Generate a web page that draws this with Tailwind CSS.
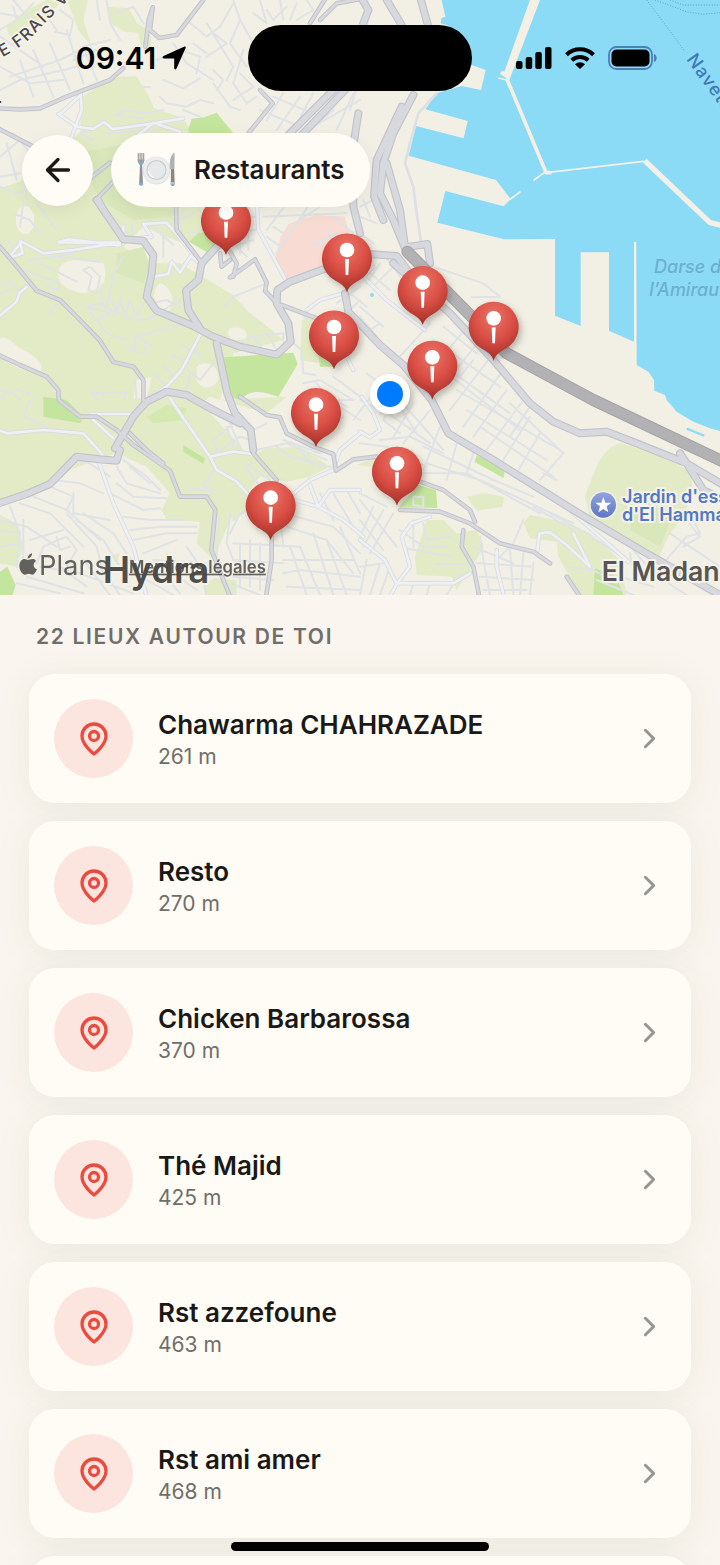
<!DOCTYPE html>
<html lang="fr">

<head>
  <meta charset="utf-8" />
  <meta name="viewport" content="width=device-width, initial-scale=1" />
  <title>Restaurants</title>
  <script src="https://cdn.jsdelivr.net/npm/@tailwindcss/browser@4"></script>
</head>

<body class="relative flex flex-col h-screen overflow-hidden bg-[#faf5ee] font-['Inter','Liberation_Sans',sans-serif] text-[#1a1917]">

  <!-- Map -->
  <section class="relative shrink-0 h-[595px] overflow-hidden bg-[#f2efe5]">
    <svg class="absolute inset-0 w-full h-full" viewBox="0 0 2160 1785" preserveAspectRatio="xMinYMin slice" fill="none" stroke-linecap="round" stroke-linejoin="round">
      <defs>
        <radialGradient id="red" cx=".5" cy=".25" r=".8">
          <stop offset="0" stop-color="#ec7367" />
          <stop offset=".5" stop-color="#d94e44" />
          <stop offset="1" stop-color="#962a22" />
        </radialGradient>
        <linearGradient id="blue" x2="0" y2="1">
          <stop offset="0" stop-color="#90a5dd" />
          <stop offset="1" stop-color="#5f77c6" />
        </linearGradient>
        <filter id="shade" x="-40%" y="-30%" width="180%" height="180%">
          <feDropShadow dx="8" dy="10" stdDeviation="9" flood-color="#5a5a50" flood-opacity=".4" />
        </filter>
        <g id="pin">
          <path fill="url(#red)" filter="url(#shade)" d="M0 100C-6 80-20 74-38 63A75 75 0 1 1 38 63C20 74 6 80 0 100Z" />
          <circle cy="-27" r="22" fill="#fff" />
          <path fill="#fff" d="M-6 0H6L4 48H-4Z" />
        </g>

        <g id="main">
          <path d="M290 600 345 680 370 718 430 722 460 765 455 820 440 890 470 932 580 978 640 1010 720 1040 830 1064 872 1025 865 970 830 910 832 870 870 845 970 808 1060 780" />
          <path d="M655 735 605 790 595 840 558 872 565 930 600 985" />
          <path d="M650 1030 665 1100 682 1180 705 1240 752 1290 760 1350" />
          <path d="M-10 1512 80 1482 150 1452 230 1370 300 1378 350 1382 360 1350M345 1345 400 1250 440 1205 500 1175 560 1185 640 1230 720 1270" />
          <path d="M1240 285 1180 400 1150 490 1140 580 1180 660 1215 745M1205 320 1130 480 1122 590 1150 660M1160 490 1200 630 1215 740" />
          <path d="M1160 0 1205 75M1260-10 1285 80M1082-10 1105 30 1090 70" />
          <path d="M1080 760 1190 768 1230 820M1215 742 1282 732 1290 790" />
          <path d="M1040 265 905 405M1000 270 860 410M1075 340 1055 470 1060 620 1080 700" />
          <path d="M1035 880 1045 935 1140 1035 1210 1095 1295 1200 1345 1300 1480 1380 1720 1530 1940 1660 2160 1785" />
          <path d="M1180 790 1350 940 1480 1080 1590 1210 1660 1265 1740 1300 1820 1295 1910 1330 2060 1390 2170 1455M2040 1360 2060 1390 2110 1470 2170 1500" />
        </g>
        <g id="mid">
          <path d="M-10 730 30 775 110 872 180 900 250 970 300 1022 340 1086 400 1100 430 1140 430 1200" />
          <path d="M-10 1062 60 1095 140 1130 175 1170 176 1200 240 1250 290 1250 350 1290 400 1335 450 1370 510 1412 540 1490 620 1490 646 1530 634 1650 690 1790" />
          <path d="M390 1300 440 1350 490 1390" />
          <path d="M-10 325 60 328 120 325 200 290 330 240 370 205M436 140 446 60 458 22 450 90 478 114 530 105 610 0" />
          <path d="M-10 383 100 440M270 535 330 488M380 490 340 545 295 592 345 680" />
          <path d="M780 270 818 310 745 400M930 70 980-10M960 60 1010 10 1090-5" />
          <path d="M845 915 950 955 1010 980M690 832 765 778 800 848 795 872 830 910M700 830 710 790 690 755M660 760 665 800 690 780M528 620 530 690 605 788" />
          <path d="M720 1190 800 1245 840 1252 860 1300 940 1340 1000 1362 1008 1412 1060 1378 1130 1370M760 1360 830 1440" />
          <path d="M1260 1445 1330 1470 1410 1530 1425 1565M1200 1530 1320 1535 1410 1570 1500 1630 1600 1655 1650 1690M1390 1590 1385 1640 1420 1700 1438 1790M1700 1730 1740 1790" />
          <path d="M815 1610 815 1680 798 1790" />
        </g>
        <g id="light">
          <path d="M-10 1288 20 1300 130 1290 250 1300 315 1372M297 1388 340 1510 400 1640 440 1790M510 1195 540 1240 630 1370 650 1410 710 1445 760 1500M630 1370 700 1355 755 1362" />
          <path d="M600 1005 545 1110 500 1160 450 1190M870 1490 930 1440 1000 1410 1020 1350 1080 1300M930 1455 955 1520 990 1470 1080 1470M880 1500 955 1520 1030 1560 1090 1610" />
          <path d="M770 600 775 690 860 845M242 280 245 330 215 410M175 342 230 380 280 387 312 366 338 387 430 375 550 355M180 342 242 285M415 405 460 368 540 395" />
          <path d="M25 775 65 725 130 760 220 750 360 728 175 727 205 718 360 736M60 725 68 760 25 775M370 680 368 720M430 672 500 668 545 720 600 790M460 830 505 822 515 785 540 818 572 768 600 790M430 672 455 710 370 720" />
          <path d="M-10 955 50 905 58 880 80 860M272 1242 400 1242M340 1315 280 1260" />
          <path d="M1080 1620 1155 1680 1190 1752 1230 1700 1205 1610 1235 1570 1290 1550M1190 1750 1360 1750 1410 1720M1190 1752 1170 1790M1490 1650 1490 1700 1512 1790" />
          <path d="M1612 1655 1618 1600 1650 1597 1700 1635 1770 1700 1720 1600M1720 1540 1885 1685M1080 1295 1110 1312 1140 1290 1120 1240 1085 1190" />
          <path d="M920 930 960 900 1030 880M1090 830 1160 900 1275 990M1120 800 1090 830M1010 1010 1060 1110" />
        </g>
        <g id="street">
          <!-- north-west -->
          <path d="M0 110 60 150 130 200M40 0 90 60M0 200 90 250 190 240M60 180 100 290M100 150 160 290M150 130 210 270M30 230 180 180 240 150M0 270 60 240 230 200M200 90 250 250M220 180 290 150M290 240 250 140 330 120" />
          <path d="M165 95 210 105 220 60 180 30M320 0 330 70 360 120M290 0 300 60M350 40 400 20 430 70M0 90 50 60 40 20M0 40 60 50 100 10M120 20 170 90" />
          <path d="M480 290 500 310 560 320 600 300 640 310M490 240 550 265 600 235M470 180 540 150 600 170 590 220M520 130 560 190 640 240M620 70 700 200 680 240M560 60 620 110 660 80 700 10M620 160 580 130M700 0 720 60 690 130 740 200M640 100 680 130 620 170" />
          <path d="M720 60 760 130 790 150M800 30 820 60 860 20M840 0 850 60M870 60 890 10M720 220 760 260 700 300M730 150 700 250 740 310 770 290M640 250 690 320 720 330M550 330 600 350M640 210 670 240 650 270M760 40 800 70 780 0M890 60 940 30 920 0" />
          <path d="M355 345 370 330 440 340 490 330M350 345 430 355M320 400 480 390M420 260 450 262M280 420 240 400 270 390M0 470 60 420M20 430 50 540M40 400 100 470M0 530 60 520M0 560 50 580 100 560 160 600M70 520 80 600" />
          <path d="M780 330 900 380M820 290 960 350M850 280 800 360M900 290 830 390M940 280 880 390M1000 330 940 380M1060 280 1010 390M1080 230 1050 330M940 380 1080 300" />
          <!-- west -->
          <path d="M40 640 90 660 120 700M70 610 60 680M110 610 170 690M130 600 180 620M20 720 40 740M50 800 100 820 180 850M110 785 230 845M90 780 170 770 300 785M170 770 220 760M0 850 40 850M30 840 60 880M0 880 30 870" />
          <path d="M250 810 270 800 300 830 290 880 265 870 275 830 250 810M300 870 310 910M320 920 340 830 370 770M260 920 290 960 320 1000 380 1020M330 900 360 940M365 890 350 940M340 950 360 900 375 945 390 900 410 950 430 910M260 920 300 910 350 940M365 955 430 960 500 935M140 860 180 870M150 940 175 905" />
          <path d="M410 1000 400 1050 420 1060M410 1010 460 1040M420 1005 540 975M290 960 330 940 260 920M380 1040 410 1045M430 1030 440 1060M490 700 490 770M460 680 520 735M395 675 400 710" />
          <path d="M545 1035 590 1060M515 1065 565 1090M490 1095 530 1140M460 1120 500 1160M565 1110 600 1140 640 1090M560 1170 570 1120M440 960 540 900M450 910 500 900 540 920M590 1045 600 1070M405 1140 410 1200" />
          <path d="M670 925 700 890 800 850M700 1040 760 1010 850 1000M760 1010 790 1050M800 1000 830 1050M850 1000 850 1060M880 1030 905 1050 910 1120 945 1125M920 960 900 930M910 1150 960 1140 1060 1200M1000 1130 1080 1190" />
          <path d="M0 1170 40 1180 60 1200M50 1170 90 1180M270 1180 380 1175 370 1200M280 1180 290 1200M310 1175 310 1200M90 1200 70 1250 140 1280M20 1170 0 1200" />
          <!-- city grid -->
          <path d="M550 610 540 700M560 620 600 600M540 660 580 640M570 700 640 690M590 620 740 770M780 620 1050 610M790 650 1040 640M800 690 860 610M830 760 930 610M900 660 990 600M720 610 720 760M745 620 745 750M720 650 770 650M700 700 770 690M940 735 1010 700M820 680 850 700M800 710 840 740M700 740 760 720" />
          <path d="M1000 650 1060 700M980 690 1040 760M1010 910 1080 860M1020 960 1080 900M1050 880 1100 920M1110 820 1170 870M1140 790 1100 850M1180 800 1120 860M1150 760 1200 830" />
          <path d="M1080 700 1120 730M1080 650 1130 670M1090 600 1110 650M1120 600 1080 620M1300 800 1450 850 1500 890 1415 892M1110 990 1140 970M1080 920 1150 980M1080 950 1130 1010M1200 1070 1290 970" />
          <path d="M1330 980 1430 1060M1300 1020 1500 1160M1280 1060 1530 1240M1400 980 1290 1120M1440 1020 1320 1170M1480 1060 1350 1230M1510 1110 1390 1280M1520 1170 1420 1310M1570 1200 1460 1350M1590 1250 1510 1380M1620 1300 1550 1420" />
          <path d="M1340 1120 1560 1290M1370 1170 1680 1350M1400 1230 1640 1380M1440 1280 1660 1430M1530 1210 1690 1360 1620 1440M1590 1220 1530 1310M1630 1420 1670 1440M1380 1130 1420 1080" />
          <!-- centre -->
          <path d="M1100 1120 1200 1200 1330 1350M1080 1200 1180 1250 1290 1330M1120 1180 1060 1260M1160 1160 1250 1300M1200 1150 1150 1260 1200 1300M1240 1210 1180 1310M1140 1320 1230 1310 1330 1360M1080 1330 1160 1340 1280 1400M1270 1340 1480 1440 1600 1490M1280 1390 1440 1440 1720 1570M1260 1420 1400 1420 1620 1540" />
          <path d="M1200 1230 1140 1240M1290 1230 1210 1330M1320 1280 1270 1410M1370 1330 1340 1440M1420 1360 1400 1420M1040 1220 970 1180M950 1150 1010 1220M640 1320 700 1270 740 1290M660 1350 720 1310 750 1320M640 1320 650 1360M680 1280 700 1340M690 1270 720 1340" />
          <path d="M770 1350 860 1330 980 1380M850 1320 960 1360M900 1350 940 1400M830 1340 870 1370 990 1400M760 1290 800 1270M640 1410 610 1460 640 1470 620 1500M560 1468 630 1468M735 1400 780 1460M740 1390 810 1440M940 1200 1060 1200M990 1200 1080 1260M1030 1250 970 1300" />
          <!-- south-west -->
          <path d="M190 1390 260 1385 330 1430M160 1440 240 1450 310 1480M150 1460 220 1490 200 1530M220 1480 220 1540 330 1560M100 1490 200 1530 300 1620M60 1510 150 1540 250 1640M30 1520 60 1600 50 1700M0 1560 80 1580 170 1640" />
          <path d="M350 1400 380 1450 480 1480M370 1380 440 1430 480 1470M350 1450 400 1490 500 1495M330 1480 430 1530 480 1525M390 1400 450 1450M370 1550 450 1560 550 1560M390 1590 480 1580 590 1580M400 1620 500 1600 590 1600M430 1660 530 1620" />
          <path d="M0 1590 60 1600M0 1640 60 1630M70 1560 70 1690M90 1620 190 1590M110 1690 130 1640 200 1610 230 1650 200 1700M170 1610 180 1650 210 1640M230 1560 310 1620 360 1700M250 1540 340 1600 400 1690M200 1540 290 1640 310 1720" />
          <path d="M50 1750 180 1780M80 1730 250 1780M120 1700 240 1720 400 1780M180 1700 260 1760M300 1700 360 1785M250 1680 330 1785M470 1700 540 1780M440 1740 520 1785M500 1660 520 1720 590 1770M460 1680 620 1690M560 1640 600 1700 620 1780" />
          <path d="M655 1560 650 1680M690 1540 680 1630 700 1680M720 1540 690 1600M700 1560 740 1530M720 1630 720 1760M750 1620 750 1760M780 1630 780 1770M700 1630 900 1640M700 1680 850 1690M700 1730 820 1740M650 1700 700 1785M690 1750 780 1785M840 1540 850 1640" />
          <path d="M850 1540 1000 1580 1080 1660M860 1580 980 1620 1060 1720M870 1640 920 1785M900 1640 960 1785M940 1600 1000 1785M980 1620 1040 1785M1020 1580 1080 1720M850 1680 1060 1680M850 1720 900 1710 1080 1730M860 1760 1080 1770M960 1480 1000 1560M1000 1480 1060 1580M1040 1470 1080 1540" />
          <!-- south -->
          <path d="M1080 1500 1190 1640M1080 1560 1150 1650M1120 1520 1080 1610M1150 1530 1090 1640M1180 1540 1110 1660M1080 1480 1160 1520M1240 1490 1270 1490 1270 1520 1240 1515ZM1200 1590 1270 1640 1340 1640M1240 1560 1240 1640M1215 1645 1300 1660 1350 1670M1310 1692 1400 1692M1270 1570 1280 1620 1350 1610" />
          <path d="M1100 1680 1080 1785M1140 1690 1110 1785M1170 1700 1140 1785M1080 1700 1150 1690M1230 1785 1240 1750M1280 1785 1290 1750M1340 1785 1380 1720M1440 1610 1450 1680 1470 1785M1420 1640 1540 1690M1430 1690 1600 1700M1440 1730 1600 1740M1450 1770 1580 1770M1530 1650 1540 1785M1570 1660 1560 1785M1600 1690 1590 1785M1500 1670 1530 1640" />
          <path d="M1540 1630 1570 1560M1650 1540 1760 1600 1850 1660M1600 1520 1720 1590M1700 1700 1780 1710 1850 1750M1790 1740 1900 1785M1860 1730 1960 1760M1980 1700 2060 1610 2100 1600 2080 1560M2010 1600 2160 1700M1900 1650 1960 1720 2060 1785M1890 1660 1900 1720M2070 1400 2160 1440M2060 1560 2100 1610 2050 1640" />
        </g>
      </defs>

      <!-- Parks -->
      <g fill="#e3ebc6">
        <path d="M-5 565 60 545 130 470 240 400 246 290 340 232 408 228 445 285 462 325 545 352 580 400 620 560 640 680 560 735 430 680 370 740 460 790 540 790 640 850 700 885 745 935 815 990 850 1020 700 1060 660 1200 860 1190 800 1240 630 1190 600 1215 640 1250 750 1370 800 1345 900 1340 990 1400 930 1430 860 1445 780 1430 740 1480 735 1540 690 1560 640 1680 590 1630 600 1565 500 1560 485 1530 510 1480 440 1400 350 1360 300 1375 210 1410 150 1460 0 1520Z" />
        <path d="M20 80 80 30 150-5 190 0 130 60 30 120ZM200-5 265-5 250 60 275 140 235 90ZM325 20 385 25 430 100 375 95 330 70ZM410 70 450 90 455 170 420 130ZM0 1545 50 1570 70 1640 50 1700 0 1690ZM330 1665 360 1660 350 1690ZM610 1760 640 1735 710 1740 710 1785 615 1785Z" />
        <path d="M1860 1330C1950 1350 2020 1390 2070 1410 2090 1470 2060 1550 2010 1600L1975 1672 1770 1560 1755 1490C1790 1400 1800 1350 1860 1330Z" />
        <path d="M1590 1545 1690 1565 1770 1600 1860 1680 1880 1785 1740 1785 1675 1670 1670 1625 1590 1615 1570 1570ZM1400 1490 1450 1480 1512 1490 1508 1520 1430 1532ZM1280 1560 1330 1560 1370 1600 1430 1590 1452 1640 1410 1710 1370 1770 1355 1730 1250 1725 1245 1670ZM905 960 950 940 960 1090 900 1080ZM1070 1395 1130 1370 1120 1400Z" />
      </g>
      <g fill="#d9e7bb">
        <path d="M230 460 330 440 420 420 560 600 515 650 400 660 300 600ZM350 760 430 740 450 800 430 850 350 820ZM1910 1500 2020 1540 1980 1640 1890 1590Z" />
      </g>
      <g fill="#f2efe5">
        <ellipse cx="75" cy="660" rx="28" ry="42" />
        <path d="M180 800C200 770 260 780 310 790 330 850 300 870 250 880 200 870 160 850 180 800ZM480 850C520 860 530 920 500 940 460 930 450 870 480 850ZM0 1015C30 1005 40 1040 80 1055 120 1075 140 1110 110 1120 60 1110 20 1090 0 1065ZM590 1100C620 1075 660 1100 655 1140 640 1170 600 1170 590 1140ZM690 985C720 975 745 990 740 1015 700 1030 670 1010 690 985ZM410 1140 455 1130 440 1195 400 1195Z" />
      </g>
      <g fill="#c4e59e">
        <path d="M565 388 575 356 612 352 650 338 700 400 690 440 570 440ZM568 725 610 685 665 740 620 756ZM672 1072 880 1058 893 1092 835 1190C800 1180 760 1160 720 1200L688 1190ZM0 1715 22 1700 47 1755 38 1785 0 1785ZM1255 1455 1308 1470 1312 1524 1195 1522ZM1430 1365 1515 1412 1510 1434 1424 1386ZM1785 1705 1850 1730 1870 1785 1780 1785ZM955 1060 1000 1100 960 1100ZM130 1190 200 1200 250 1250 240 1270 130 1250ZM550 1335 615 1375 610 1392 550 1355Z" />
      </g>
      <path fill="#d4e9ae" d="M440 1250 500 1215 560 1225 550 1260 460 1270Z" />
      <path fill="#f8dcd4" d="M865 672 945 645 1035 650 1070 790 970 805 860 838 825 780 842 710Z" />

      <!-- Harbour -->
      <path fill="#8cdbf6" d="M1325 0 1336 50 1324 55 1322 70 1342 76 1400 190 1457 210 1443 270 1385 258 1310 280 1276 328 1403 363 1391 415 1248 378 1226 467 1488 540 1532 597 1511 619 1336 573 1312 668 1512 718 1665 717 1665 947 1742 978 1742 757 1827 757 1827 992 1902 1025 1902 726 1909 726 1910 1095 1945 1115 1962 1140 1963 1172 1995 1185 2000 1200 2030 1235 2080 1265 2130 1285 2160 1293V0Z" />
      <path fill="#f4f0e6" d="M1590 0H1620L1528 240 1500 222 1505 212 1513 215Z" />
      <g stroke="#f4f0e6">
        <path stroke-width="11" d="M1522 240 1637 515" />
        <path stroke-width="16" stroke-linecap="butt" d="M1934 482 2130 668 2165 676" />
        <path stroke-width="5" d="M1645 517 1930 484M1602 540 1637 515M1530 598 1560 576M1496 234 1520 240" />
        <path stroke-width="11" d="M1639 518H1650" />
        <path stroke-width="6" d="M1905 728V1100" />
      </g>
      <g stroke="#5fa5cc" stroke-width="3" stroke-dasharray="3 5" stroke-linecap="butt">
        <path d="M1940 0 1985 60 2055 155M2010 0 2050 15H2160M1965 0 2060 35 2110 43 2160 38" />
      </g>
      <path stroke="#8cdbf6" stroke-width="7" d="M2063 1287 2110 1306" />
      <circle cx="1116" cy="885" r="6" fill="#8cdbf6" />

      <!-- Roads, casing first -->
      <use href="#street" stroke="#dfe3e5" stroke-width="6" />
      <use href="#light" stroke="#d9dde2" stroke-width="13" />
      <use href="#light" stroke="#eef0f3" stroke-width="8" />
      <path stroke="#dddfe1" stroke-width="8" d="M1310 280 1255 340 1230 430 1215 490 1240 560 1250 640 1262 720" />
      <g stroke="#c2c3c9">
        <use href="#mid" stroke-width="14" />
        <use href="#main" stroke-width="24" />
      </g>
      <g stroke="#d8d9df">
        <use href="#mid" stroke-width="8" />
        <use href="#main" stroke-width="17" />
      </g>
      <path stroke="#a3a3a6" stroke-width="36" d="M1222 755 1410 945 1520 1060 1780 1200 2180 1390" />
      <path stroke="#b2b1b4" stroke-width="30" d="M1222 755 1410 945 1520 1060 1780 1200 2180 1390" />

      <!-- Labels -->
      <path id="chemin" d="M-28 190C40 155 75 135 110 95S190 20 240-40" />
      <g stroke="#f5f2e9" stroke-width="12" paint-order="stroke">
        <text font-size="50" font-weight="500" letter-spacing="4" fill="#4a4a4a">
          <textPath href="#chemin">DE FRAIS VALLON</textPath>
        </text>
        <text x="308" y="1748" font-size="110" font-weight="600" fill="#4f4e4b">Hydra</text>
        <text x="1805" y="1742" font-size="80" font-weight="600" fill="#575652">El Madania</text>
        <g font-size="54" font-weight="600" fill="#5379c3">
          <text x="1866" y="1508">Jardin d'essai</text>
          <text x="1866" y="1563">d'El Hamma</text>
        </g>
      </g>
      <text x="-6" y="310" font-size="40" font-weight="600" fill="#333">.</text>
      <g font-size="54" font-style="italic" font-weight="500" fill="#6cafd0">
        <text x="1962" y="820">Darse de</text>
        <text x="1948" y="887">l’Amirauté</text>
      </g>
      <text transform="translate(2058 178) rotate(54)" font-size="54" font-weight="500" letter-spacing="3" fill="#4179b5">Navette</text>

      <circle cx="1810" cy="1515" r="43" fill="#f1efe6" />
      <circle cx="1810" cy="1515" r="38" fill="url(#blue)" />
      <path fill="#fff" d="m1810 1491 6 17h18l-14 11 5 18-15-10-15 10 5-18-14-11h18z" />

      <!-- Attribution -->
      <g fill="#4a4945" opacity=".85">
        <path d="M96 1660c1 7-5 15-13 16-1-7 6-15 13-16ZM84 1680c4 0 7-3 13-3 5 0 9 2 11 6-10 6-9 21 3 25-4 9-8 16-14 16-4 0-6-3-11-3s-7 3-11 3c-9 0-17-14-17-26 0-13 8-21 16-21 4 0 7 3 10 3Z" />
        <text x="117" y="1726" font-size="82">Plans</text>
        <a href="#legal">
          <text x="387" y="1718" font-size="50" font-weight="600" text-decoration="underline">Mentions légales</text>
        </a>
      </g>

      <!-- Places -->
      <use href="#pin" x="678" y="665" />
      <use href="#pin" x="1041" y="777" />
      <use href="#pin" x="1268" y="875" />
      <use href="#pin" x="1481" y="982" />
      <use href="#pin" x="1002" y="1008" />
      <use href="#pin" x="1297" y="1099" />
      <circle cx="1170" cy="1182" r="60" fill="#fff" filter="url(#shade)" />
      <circle cx="1170" cy="1182" r="39" fill="#007aff" />
      <use href="#pin" x="948" y="1241" />
      <use href="#pin" x="1191" y="1417" />
      <use href="#pin" x="812" y="1520" />
    </svg>

    <!-- Status bar -->
    <div class="relative grid grid-cols-[1fr_224px_1fr] items-center mt-[25px] text-black">
      <div class="flex items-center justify-center gap-1.5 pl-[14px]">
        <span class="text-[30px] leading-[36px] font-semibold">09:41</span>
        <svg class="w-6 h-6" viewBox="0 0 24 24" fill="currentColor">
          <path d="M22.500.500c1 0 1.500.600 1.100 1.600L14.500 22.500c-.6 1.400-2.300 1.100-2.300-.4V12.500L2 12.400C.400 12.300.100 10.600 1.600 9.900Z" />
        </svg>
      </div>
      <div class="h-[66px] rounded-full bg-black"></div>
      <div class="flex items-center justify-center gap-[13px] pr-5">
        <svg class="w-[36px] h-[22px]" viewBox="0 0 36 22" fill="currentColor">
          <rect y="14" width="6.500" height="8" rx="2" />
          <rect x="9.700" y="10" width="6.500" height="12" rx="2" />
          <rect x="19.300" y="5" width="6.500" height="17" rx="2" />
          <rect x="29" width="6.500" height="22" rx="2" />
        </svg>
        <svg class="w-[30px] h-[22px]" viewBox="0 0 30 22" fill="none" stroke="currentColor" stroke-width="4">
          <path d="M1.500 7.800a19.500 19.500 0 0 1 27 0M6.800 13.300a12 12 0 0 1 16.400 0" />
          <path fill="currentColor" stroke="none" d="M15 22 10 17.200a7.300 7.300 0 0 1 10 0Z" />
        </svg>
        <svg class="w-[49px] h-[24px]" viewBox="0 0 49 24">
          <rect x="1" y="1" width="43" height="22" rx="7.500" fill="none" stroke="#4a7fb8" stroke-width="1.800" />
          <rect x="3.500" y="3.500" width="38" height="17" rx="5" />
          <path fill="#4a7fb8" d="M46 8c3.500 1 3.500 7 0 8Z" />
        </svg>
      </div>
    </div>

    <!-- Header -->
    <header class="relative flex items-center gap-[18px] mt-[42px] pl-[22px]">
      <button type="button" aria-label="Retour" class="grid place-items-center size-[71px] rounded-full bg-[#fffcf5] shadow-[0_4px_16px_rgba(60,60,40,0.08)]">
        <svg class="size-9" viewBox="0 0 24 24" fill="none" stroke="currentColor" stroke-width="2.200" stroke-linecap="round" stroke-linejoin="round">
          <path d="m12 19-7-7 7-7M19 12H5" />
        </svg>
      </button>
      <div class="flex items-center gap-[18px] h-[74px] px-[25px] rounded-full bg-[#fffcf5] shadow-[0_4px_16px_rgba(60,60,40,0.08)]">
        <svg class="w-10 h-9" viewBox="0 0 40 36">
          <circle cx="20.500" cy="18.500" r="14" fill="#e2e4e5" />
          <circle cx="20.500" cy="18" r="13" fill="#eceded" />
          <circle cx="20.500" cy="18" r="9.500" fill="#e6e8e9" stroke="#c9cccf" stroke-width="1.200" />
          <path fill="none" stroke="#fff" stroke-width="1.500" d="M12.500 19a8 8 0 0 0 5 6.500" />
          <path fill="none" stroke="#a09c98" stroke-width="1.200" d="M2.300 1v8M4.100 1v8M5.900 1v8M7.700 1v8" />
          <path fill="#a09c98" d="M1.700 7.500h6.600c0 3-1 4.500-2.300 5.500H4c-1.300-1-2.300-2.500-2.300-5.500Z" />
          <path fill="#8d9398" d="M4 12.500h2L7 31.500c.2 3-4 3-3.800 0Z" />
          <path fill="#68b5e8" d="M3 10.500h4v1.500l-1 1H4l-1-1ZM3.300 31h3.600v2H3.300Z" />
          <path fill="#aeb2b5" d="M38.500.500c-4 2.500-5.500 9-4.500 16.500h4.500Z" />
          <path fill="#8d8780" d="M35 17h3.200l.5 15c0 2.500-4 2.500-4 0Z" />
          <path fill="#9acbe8" d="M34.900 30h3.500v2.500h-3.500Z" />
        </svg>
        <h1 class="text-[26px] leading-[32px] font-semibold">Restaurants</h1>
      </div>
    </header>
  </section>

  <!-- List -->
  <main class="relative isolate flex-1 min-h-0 overflow-hidden px-[29px] pt-[26px]">
    <h2 class="pl-[7px] text-[21px] leading-[32px] font-semibold tracking-[0.08em] text-[#706e69]">22 LIEUX AUTOUR DE TOI</h2>
    <ul id="places" class="flex flex-col gap-[18px] mt-[21px]"></ul>
  </main>

  <div class="absolute bottom-[14px] left-1/2 -translate-x-1/2 w-[258px] h-[9px] rounded-full bg-black"></div>

  <script>
    const places = [
      { name: 'Chawarma CHAHRAZADE', distance: '261 m' },
      { name: 'Resto', distance: '270 m' },
      { name: 'Chicken Barbarossa', distance: '370 m' },
      { name: 'Thé Majid', distance: '425 m' },
      { name: 'Rst azzefoune', distance: '463 m' },
      { name: 'Rst ami amer', distance: '468 m' },
      { name: '', distance: '' },
    ];

    document.getElementById('places').innerHTML = places.map((place) => `
      <li>
        <a href="#place" class="relative flex items-center h-[129px] px-[25px] rounded-[26px] bg-[#fffcf5] before:absolute before:inset-0 before:-z-10 before:rounded-[26px] before:shadow-[0_4px_36px_rgba(60,110,60,0.08)]">
          <span class="grid place-items-center shrink-0 size-[79px] rounded-full bg-[#fde5df]">
            <svg class="size-9" viewBox="0 0 24 24" fill="none" stroke="#e94b3f" stroke-width="2.2" stroke-linecap="round" stroke-linejoin="round">
              <path d="M20 10c0 6-8 12-8 12s-8-6-8-12a8 8 0 0 1 16 0Z" />
              <circle cx="12" cy="10" r="3" />
            </svg>
          </span>
          <span class="flex-1 min-w-0 ml-[25px] pt-0.5">
            <span class="block text-[26px] leading-[34px] font-semibold">${place.name}</span>
            <span class="block text-[21px] leading-[30px] text-[#706e69]">${place.distance}</span>
          </span>
          <svg class="size-[33px]" viewBox="0 0 24 24" fill="none" stroke="#969590" stroke-width="2.2" stroke-linecap="round" stroke-linejoin="round">
            <path d="m9 18 6-6-6-6" />
          </svg>
        </a>
      </li>`).join('');
  </script>
</body>

</html>
